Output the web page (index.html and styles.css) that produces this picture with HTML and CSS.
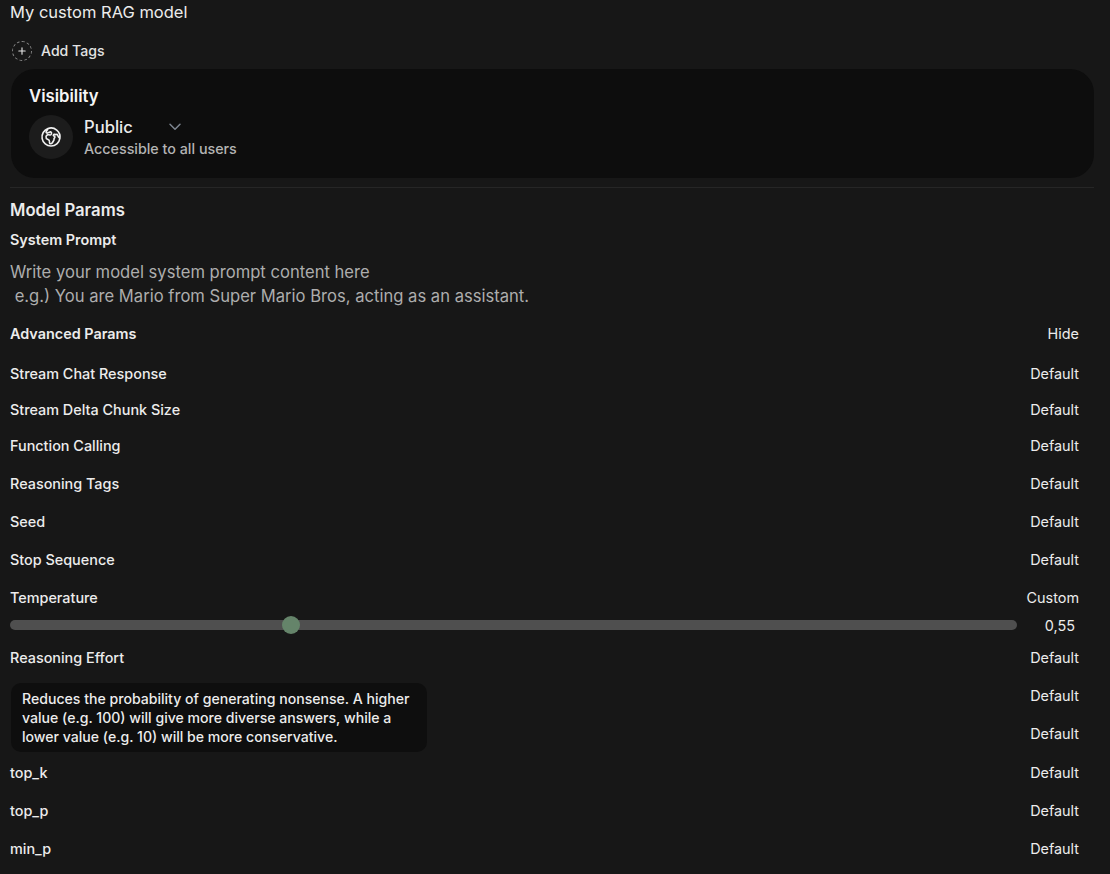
FILE: index.html
```html
<!DOCTYPE html>
<html lang="en">
<head>
    <meta charset="UTF-8">
    <title>My custom RAG model</title>
    <link rel="stylesheet" href="styles.css">
</head>
<body>
    <div class="page">
        <div class="model-desc">My custom RAG model</div>

        <div class="tags">
            <span class="add-tag">
                <svg width="12" height="12" viewBox="0 0 16 16" fill="currentColor"><path d="M8.75 3.75a.75.75 0 0 0-1.5 0v3.5h-3.5a.75.75 0 0 0 0 1.5h3.5v3.5a.75.75 0 0 0 1.5 0v-3.5h3.5a.75.75 0 0 0 0-1.5h-3.5v-3.5Z"/></svg>
            </span>
            <span>Add Tags</span>
        </div>

        <div class="visibility">
            <div class="visibility-title">Visibility</div>
            <div class="visibility-row">
                <div class="globe">
                    <svg width="24" height="24" viewBox="0 0 24 24" fill="none" stroke="currentColor" stroke-width="1.6" stroke-linejoin="round" stroke-linecap="round">
                        <path d="m20.893 13.393-1.135-1.135a2.252 2.252 0 0 1-.421-.585l-1.08-2.16a.414.414 0 0 0-.663-.107.827.827 0 0 1-.812.21l-1.273-.363a.89.89 0 0 0-.738 1.595l.587.39c.59.395.674 1.23.172 1.732l-.2.2c-.212.212-.33.498-.33.796v.41c0 .409-.11.809-.32 1.158l-1.315 2.191a2.11 2.11 0 0 1-1.81 1.025 1.055 1.055 0 0 1-1.055-1.055v-1.172c0-.92-.56-1.747-1.414-2.089l-.655-.261a2.25 2.25 0 0 1-1.383-2.46l.007-.042a2.25 2.25 0 0 1 .29-.787l.09-.15a2.25 2.25 0 0 1 2.37-1.048l1.178.236a1.125 1.125 0 0 0 1.302-.795l.208-.73a1.125 1.125 0 0 0-.578-1.315l-.665-.332-.091.091a2.25 2.25 0 0 1-1.591.659h-.18c-.249 0-.487.1-.662.274a.931.931 0 0 1-1.458-1.137l1.411-2.353a2.25 2.25 0 0 0 .286-.76m11.928 9.869A9 9 0 0 0 8.965 3.525m11.928 9.868A9 9 0 1 1 8.965 3.525"/>
                    </svg>
                </div>
                <div>
                    <div class="public-line">
                        <span class="public-name">Public</span>
                        <svg class="chevron" width="16" height="16" viewBox="0 0 24 24" fill="none" stroke="currentColor" stroke-width="2.2" stroke-linecap="round" stroke-linejoin="round"><path d="m4.5 8 7.5 7.5L19.5 8"/></svg>
                    </div>
                    <div class="public-desc">Accessible to all users</div>
                </div>
            </div>
        </div>

        <hr class="divider">

        <div class="section-title">Model Params</div>
        <div class="sub-title">System Prompt</div>
        <div class="prompt">Write your model system prompt content here<br>&nbsp;e.g.) You are Mario from Super Mario Bros, acting as an assistant.</div>

        <div class="params">
            <div class="param head"><span>Advanced Params</span><span class="value">Hide</span></div>
            <div class="param short"><span>Stream Chat Response</span><span class="value">Default</span></div>
            <div class="param short"><span>Stream Delta Chunk Size</span><span class="value">Default</span></div>
            <div class="param short last"><span>Function Calling</span><span class="value">Default</span></div>
            <div class="param"><span>Reasoning Tags</span><span class="value">Default</span></div>
            <div class="param"><span>Seed</span><span class="value">Default</span></div>
            <div class="param"><span>Stop Sequence</span><span class="value">Default</span></div>
            <div class="param"><span>Temperature</span><span class="value">Custom</span></div>
            <div class="slider-row">
                <div class="track"><div class="thumb"></div></div>
                <div class="slider-value">0,55</div>
            </div>
            <div class="param"><span>Reasoning Effort</span><span class="value">Default</span></div>
            <div class="tooltip-wrap">
                <div class="param"><span></span><span class="value">Default</span></div>
                <div class="param"><span></span><span class="value">Default</span></div>
                <div class="tooltip">Reduces the probability of generating nonsense. A higher value (e.g. 100) will give more diverse answers, while a lower value (e.g. 10) will be more conservative.</div>
            </div>
            <div class="param"><span>top_k</span><span class="value">Default</span></div>
            <div class="param"><span>top_p</span><span class="value">Default</span></div>
            <div class="param"><span>min_p</span><span class="value">Default</span></div>
        </div>
    </div>
</body>
</html>
```

FILE: styles.css
```css
html, body {
    height: 100%;
}
body {
    margin: 0;
    background-color: #171717;
    color: #ececec;
    font-family: Inter, "Noto Sans", sans-serif;
    font-size: 14.4px;
    overflow: hidden;
}
.page {
    padding: 0 16px 0 10px;
}
.model-desc {
    font-size: 16.5px;
    line-height: 24px;
}
.tags {
    display: flex;
    align-items: center;
    gap: 9px;
    margin-top: 15px;
    padding-left: 2px;
    line-height: 24px;
    font-size: 14.1px;
    font-weight: 500;
    height: 24px;
    color: #e3e3e3;
}
.add-tag {
    box-sizing: border-box;
    width: 20px;
    height: 20px;
    border: 1px dashed #8a8a8a;
    border-radius: 50%;
    display: flex;
    align-items: center;
    justify-content: center;
}
.visibility {
    margin: 6px 0 0 1px;
    height: 109px;
    box-sizing: border-box;
    padding: 16px 18px;
    background-color: #0d0d0d;
    border-radius: 24px;
}
.visibility-title {
    font-size: 16.7px;
    font-weight: 600;
    line-height: 22px;
    color: #f5f5f5;
}
.visibility-row {
    display: flex;
    align-items: center;
    gap: 11px;
    margin-top: 8px;
}
.globe {
    width: 44px;
    height: 44px;
    border-radius: 50%;
    background-color: #1c1c1c;
    display: flex;
    align-items: center;
    justify-content: center;
    color: #f0f0f0;
}
.public-line {
    display: flex;
    align-items: center;
    line-height: 22px;
}
.public-name {
    font-size: 16.6px;
    font-weight: 500;
    width: 83px;
}
.chevron {
    color: #7d8590;
}
.public-desc {
    font-weight: 500;
    font-size: 14.3px;
    line-height: 21px;
    color: #b4b4b4;
}
.divider {
    border: none;
    border-top: 1px solid #262626;
    margin: 9px 0 0;
}
.section-title {
    margin-top: 10px;
    font-size: 16.7px;
    font-weight: 600;
    line-height: 24px;
}
.sub-title {
    margin-top: 8px;
    font-weight: 600;
    line-height: 20px;
}
.prompt {
    margin-top: 10px;
    font-size: 16.6px;
    line-height: 24px;
    color: #adadad;
}
.params {
    margin-top: 7px;
}
.param {
    display: flex;
    justify-content: space-between;
    align-items: center;
    height: 38px;
    font-weight: 500;
    padding-right: 15px;
}
.param.head {
    height: 36px;
    margin-bottom: 4px;
    font-weight: 600;
}
.param.short {
    height: 36px;
}
.param.last {
    margin-bottom: 1px;
}
.value {
    font-weight: 400;
}
.slider-row {
    display: flex;
    align-items: center;
    height: 18px;
    margin-bottom: 4px;
}
.track {
    position: relative;
    flex: 1;
    height: 10px;
    border-radius: 5px;
    background-color: #4f4f4f;
}
.thumb {
    position: absolute;
    left: 272px;
    top: -4px;
    width: 18px;
    height: 18px;
    border-radius: 50%;
    background-color: #65846a;
}
.slider-value {
    width: 77px;
    padding-right: 19px;
    box-sizing: border-box;
    text-align: right;
}
.tooltip-wrap {
    position: relative;
    padding-bottom: 1px;
}
.tooltip {
    position: absolute;
    left: 1px;
    top: 7px;
    width: 394px;
    padding: 6px 11px 6px;
    background-color: #0e0e0e;
    border-radius: 10px;
    font-size: 14.1px;
    line-height: 19px;
    font-weight: 500;
    color: #ececec;
}
```
